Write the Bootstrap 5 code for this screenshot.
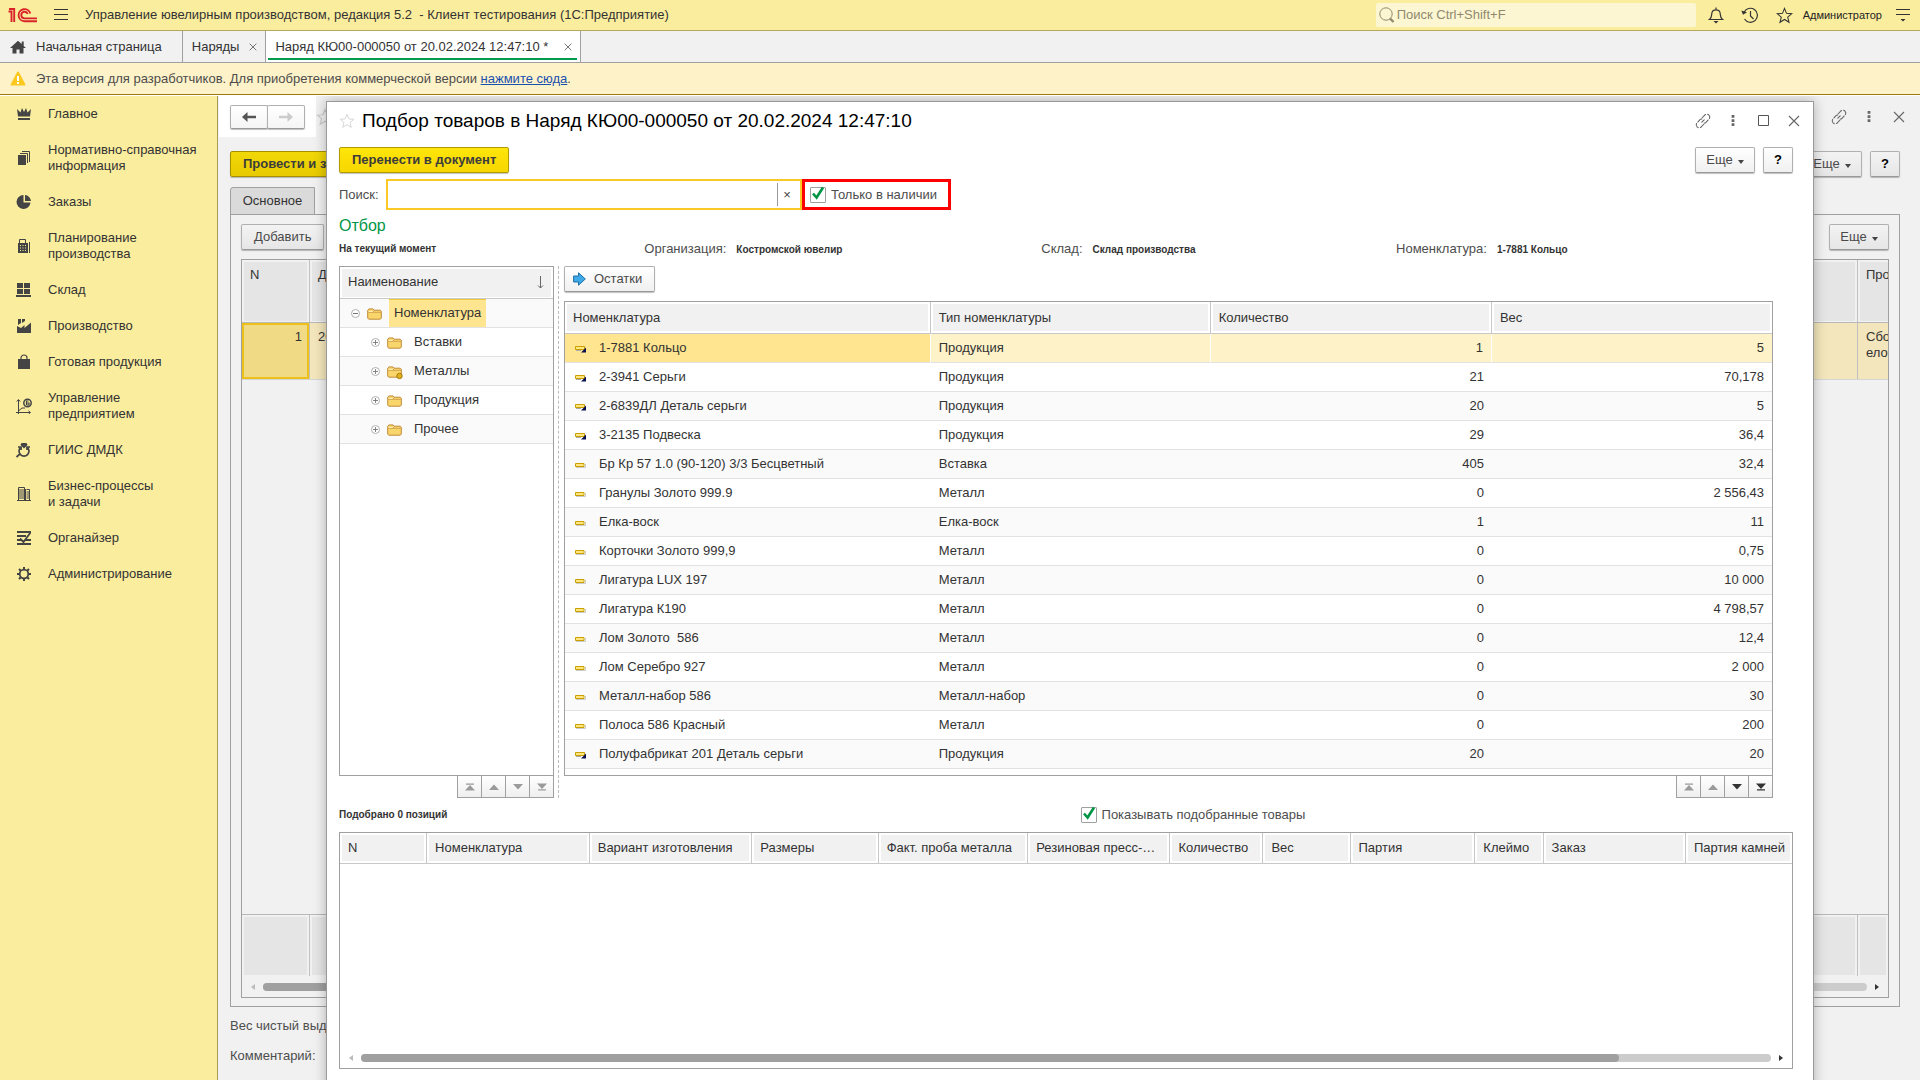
<!DOCTYPE html>
<html lang="ru">
<head>
<meta charset="utf-8">
<meta name="viewport" content="width=device-width, initial-scale=1">
<title>Управление ювелирным производством</title>
<link href="https://cdn.jsdelivr.net/npm/bootstrap@5.3.0/dist/css/bootstrap.min.css" rel="stylesheet">
<style>
:root{--yel:#fbed9e;--line:#a0a0a0;--soft:#c8c8c8;--head:#f1f1f1;--ink:#333}
body{font-family:"Liberation Sans",Arial,sans-serif;font-size:13px;line-height:16px;color:var(--ink);background:#f1f1f1}
svg{flex:none;display:block}
button,input{font:inherit;color:inherit}
a.plain{color:inherit;text-decoration:none}
.app{height:100vh;overflow:hidden}
.titlebar{height:31px;background:var(--yel);border-bottom:1px solid #b5a85c;padding:0 10px 0 8px}
.titlebar .app-name{margin-left:17px}
.find{width:320px;height:24px;background:#fdf6d3;border-radius:2px;padding:0 4px 0 3px;margin-right:12px}
.find input{border:0;background:none;outline:0;padding:0 0 0 2px;width:100%}
.find input::placeholder{color:#8f8a6e;opacity:1}
.tools{gap:17px;margin-right:10px}
.user{font-size:11px;color:#222;margin-right:14px}
.bare{border:0;background:none;padding:0;display:block;color:#444}
.opentabs{height:32px;border-bottom:1px solid var(--line)}
.opentab{border-right:1px solid var(--line);padding:0 8px 0 9px;gap:10px;position:relative}
.opentab.active{background:#fff;gap:16px}
.opentab.active::after{content:"";position:absolute;left:2px;right:3px;bottom:2px;height:2px;background:#009a4e}
.opentab.home{padding:0 20px 0 10px}
.notice{height:32px;background:#fef2c8;border-bottom:1px solid #9a7b10;padding-left:10px;gap:10px;color:#4d4d4d}
.notice a{color:#1a50b0}
.work{border-top:1px solid #fff;min-height:0}
.side{width:218px;background:var(--yel);border-right:1px solid #a69a55}
.side a{padding:10px 8px 10px 16px;gap:16px}
.side svg{color:#444}
.stage{position:relative;min-width:0;overflow:hidden}
/* document form under the picker */
.navwrap{background:#fff;margin-left:1px;padding:9px 11px 8px;height:41px}
.btn1c{border:1px solid #b0b0b0;border-bottom-color:#999;box-shadow:0 1px 1px rgba(0,0,0,.25);border-radius:2px;background:linear-gradient(#fff,#f0f0f0);height:26px;padding:0 12px;line-height:16px;color:#4a4a4a;white-space:nowrap}
.btn1c:hover{background:#f4f4f4}
.btn-main{background:linear-gradient(#ffe60a,#f7d600);border-color:#b29a00;font-weight:bold;color:#3c3c3c}
.dim .btn1c{background:linear-gradient(#f3f3f3,#e6e6e6)}
.dim .btn-main{background:linear-gradient(#f1d808,#e8ca00);border-color:#a69000}
.btn-q{width:30px;padding:0;color:#000;font-weight:bold;text-align:center}
.btn-more{width:60px;padding:0;gap:5px}
.btn-more::after{content:"";border:3px solid transparent;border-top:4px solid #444;border-bottom:0;margin-top:3px}
.navpair .btn1c{height:24px;width:38px;padding:0;background:linear-gradient(#fff,#f5f5f5)}
.navpair .btn1c+.btn1c{margin-left:-1px}
.wicons{color:#666}
.wicons.outer{margin-right:6px}
.wicons.inner{margin-right:-16px}
.dim{padding:14px 20px 0 12px}
.commands{margin-bottom:10px}
.pagetab{width:85px;height:28px;background:#dadada;border:1px solid var(--line);border-radius:3px 0 0 0;padding:0}
.panel1c{border:1px solid var(--line);margin-top:-1px;padding:9px 10px 8px;height:793px}
.backgrid{border:1px solid var(--line);margin-top:9px;height:739px}
.hcell{background:#e5e5e5;border:solid #f1f1f1;border-width:2px 2px 1px;padding:5px 0 0 6px}
.hrow{border-bottom:1px solid #b8b8b8}
.hrow>*+*{border-left:1px solid #c0c0c0}
.hrow.top{height:63px}
.hrow.item{height:57px;border-color:#d5d5d5;background:#f3e6bc}
.hrow.item>*+*{padding:6px 0 0 8px}
.hrow.total{height:62px;border-bottom:0;border-top:1px solid #b8b8b8}
.c-num{width:67px}.c-end{width:31px}
.current{border:2px solid #ecc11c;background:#f1da86;padding:4px 5px}
.scrollrow{height:21px;padding:0 9px}
.track{height:8px;border-radius:4px;background:#ccc}
.thumb{height:8px;border-radius:4px;background:#a0a0a0}
.tri-l,.tri-r{border:3px solid transparent;flex:none}
.tri-l{border-right:4px solid #bbb;border-left:0}
.tri-r{border-left:4px solid #333;border-right:0}
.foot{margin-top:11px}
.foot+.foot{margin-top:14px}
/* picker window */
.picker{position:absolute;left:108px;right:106px;top:5px;bottom:-20px;background:#fff;border:1px solid #999;box-shadow:0 0 12px rgba(0,0,0,.28);padding:0 20px 30px 12px}
.picker h1{font-size:19px;line-height:22px;color:#000;margin:0 0 0 7px;font-weight:normal}
.wtitle{height:45px;padding:5px 0 13px}
.lookrow{margin-top:6px}
.lookrow .cap{width:47px}
.lookup{border:2px solid #fbc926;height:31px;width:416px}
.lookup input{border:0;outline:0;width:100%;background:none;padding:0 4px}
.lookup button{border:0;border-left:1px solid #999;background:none;width:23px;height:23px;padding:0 4px 0 0;color:#444;flex:none}
.hot{border:3px solid #f00;height:31px;padding:0 8px 0 5px;width:149px}
.tick{appearance:none;width:16px;height:16px;border:1px solid #a0a0a0;border-radius:1px;margin:0;background:#fff;display:block}
.tickbox{position:relative;width:16px;height:16px;margin-right:5px}
.tickbox svg{position:absolute;left:1px;top:-2px;pointer-events:none}
.lbl{color:#4d4d4d}
.tiny{font-size:10px;font-weight:bold;color:#333}
.lbl>.tiny{margin-left:10px}
.filters .f1{margin-left:0}
h2.sect{font-size:16px;line-height:20px;color:#009646;font-weight:normal;margin:6px 0 0}
.filters{height:30px;padding-top:5px}
.f1{width:21%}.f2{width:27.3%}.f3{width:24.4%}
.mid{height:532px}
.tree{width:215px}
.goodspane{margin-right:20px}
.goodsbar{margin-bottom:9px}
.framed{border:1px solid var(--line);background:#fff}
.hd{height:31px;background:var(--head);border:2px solid #fff;border-bottom-width:1px;padding:0 7px 2px 6px;box-shadow:0 1px 0 var(--soft);margin-bottom:1px}
.tree ul{margin:0;padding:0;list-style:none}
.tree li{height:29px;border-bottom:1px solid #e2e2e2;padding-left:31px;gap:7px}
.tree li:nth-child(odd),.goods tbody tr:nth-child(odd){background:#fafafa}
.tree li.root{padding-left:11px}
.tree li span{padding:6px 5px}
.tree li.root span{background:#ffe58f;border-top:1px solid #f3ca3d;padding-top:5px}
.split{border-left:1px dashed #bbb;margin:0 5px 0 4px}
table.grid1c{table-layout:fixed;width:100%;border-collapse:separate;border-spacing:0;margin:0}
.grid1c th{height:31px;font-weight:normal;background:var(--head);background-clip:padding-box;border-bottom:1px solid var(--soft);border-right:1px solid var(--soft);box-shadow:inset 0 0 0 2px #fff;padding:0 8px;text-align:left;white-space:nowrap;overflow:hidden;text-overflow:ellipsis}
.grid1c th:last-child{border-right:0}
.goods th{height:32px}
.goods td{height:29px;border-bottom:1px solid #e2e2e2;padding:0 8px;white-space:pre}
.goods td:nth-child(n+3){text-align:right}
.goods td svg{display:inline-block;vertical-align:-1px;margin:0 12px 0 2px}
.goods tr.sel td{background:#fef2c8;border-right:1px solid #fff}
.goods tr.sel td:first-child{background:#ffe58f}
.goods tr.sel td:last-child{border-right:0}
.pager{height:22px}
.pager button{width:25px;height:22px;border:1px solid var(--line);border-top:0;background:linear-gradient(#fff,#efefef);padding:0;color:#9a9a9a;display:flex;align-items:center;justify-content:center}
.pager button+button{border-left:0;width:24px}
.pager button.on{color:#333}
.summary{height:34px}
.summary .count{width:51%}
.picked{height:237px}
.picked th:last-child{text-overflow:clip}
</style>
</head>
<body>
<svg width="0" height="0" class="position-absolute" aria-hidden="true">
<defs>
<symbol id="x" viewBox="0 0 12 12"><path d="M1 1l10 10M11 1L1 11" stroke="currentColor" fill="none" stroke-width="1.1"/></symbol>
<symbol id="dots" viewBox="0 0 4 12"><path d="M.5 0h3v3h-3zM.5 4.500h3v3h-3zM.5 9h3v3h-3z" fill="currentColor"/></symbol>
<symbol id="box" viewBox="0 0 11 11"><path d="M.5.5h10v10H.5z" fill="none" stroke="#555"/></symbol>
<symbol id="link" viewBox="0 0 16 16"><g fill="none" stroke="currentColor" stroke-width="1.100" stroke-linecap="round"><path d="M7 5l2.700-2.900a2.900 2.900 0 0 1 4.200 4.200L11 9.300c-.6.6-1.300.8-2 .7" stroke-dasharray="5 2"/><path d="M9 11l-2.700 2.900a2.900 2.900 0 0 1-4.200-4.200L5 6.700c.6-.6 1.300-.8 2-.7" stroke-dasharray="5 2"/><path d="M6.800 9.200l2.400-2.400"/></g></symbol>
<symbol id="star" viewBox="0 0 18 18"><path d="M9 1.500l2.100 5.200 5.600.4-4.300 3.600 1.400 5.500L9 13.200l-4.800 3 1.400-5.500-4.300-3.600 5.600-.4z" fill="none" stroke="currentColor" stroke-width="1.100"/></symbol>
<symbol id="fold" viewBox="0 0 15 13"><path d="M.7 11V3.200L2 1.900h4l1 1.300h6.200l1.100 1V11l-1 1.200H1.700z" fill="#f9d66b" stroke="#c08a3a"/><path d="M1.200 5.300h12.600M7 3.600l-1 1.500" stroke="#c99545" stroke-width=".8"/><path d="M1.600 4.500h4l.8-1" stroke="#fff0b8" fill="none"/></symbol>
<symbol id="minus" viewBox="0 0 9 9"><circle cx="4.500" cy="4.500" r="4" fill="#fff" stroke="#a8a8a8" stroke-width=".9"/><path d="M2 4.500h5" stroke="#777"/></symbol>
<symbol id="plus" viewBox="0 0 9 9"><circle cx="4.500" cy="4.500" r="4" fill="#fff" stroke="#a8a8a8" stroke-width=".9"/><path d="M2 4.500h5M4.500 2v5" stroke="#777" stroke-width=".9"/></symbol>
<symbol id="bar" viewBox="0 0 12 8"><path d="M1 6.500h9.500V3" stroke="#ccc" fill="none"/><path d="M.5 2.500h8.500v3H.5z" fill="#ffe680" stroke="#c9a000"/></symbol>
<symbol id="barn" viewBox="0 0 12 8"><path d="M.5 1.500h9v3h-9z" fill="#ffe680" stroke="#c9a000"/><path d="M1 5.500h5" stroke="#aaa"/><path d="M11 2.500V7.500H6z" fill="#0b1050"/></symbol>
<symbol id="tick" viewBox="0 0 14 16"><path d="M2 8.500l3.600 4L12 2.500" fill="none" stroke="#009646" stroke-width="2.600"/></symbol>
<symbol id="up" viewBox="0 0 12 8"><path d="M1 7h10L6 1.500z" fill="currentColor"/></symbol>
<symbol id="dn" viewBox="0 0 12 8"><path d="M1 1h10L6 6.500z" fill="currentColor"/></symbol>
<symbol id="top" viewBox="0 0 12 8"><path d="M1 7.500h10L6 2zM2 .5h8v1.200H2z" fill="currentColor"/></symbol>
<symbol id="end" viewBox="0 0 12 8"><path d="M1 .5h10L6 6zM2 6.300h8v1.200H2z" fill="currentColor"/></symbol>
</defs>
</svg>

<div class="app d-flex flex-column">
<header class="titlebar d-flex align-items-center">
  <svg width="30" height="16" viewBox="0 0 30 16" fill="none" stroke="#d8232a" stroke-width="1.900"><path d="M.5 4.500h3V15M1 2h5.200v13M29 14.200H16.500a6 6 0 1 1 5.800-7.700M29 11.400H16.500a3.300 3.300 0 1 1 3.200-4.400"/></svg>
  <button class="bare ms-3" aria-label="Меню"><svg width="14" height="14" viewBox="0 0 14 14"><path d="M0 1.500h14M0 6.500h14M0 11.500h14" stroke="#333"/></svg></button>
  <span class="app-name flex-grow-1">Управление ювелирным производством, редакция 5.2&nbsp; - Клиент тестирования (1С:Предприятие)</span>
  <label class="find d-flex align-items-center"><svg width="16" height="16" viewBox="0 0 16 16" fill="none" stroke="#8f8a6e"><circle cx="7" cy="7" r="6.200"/><path d="M11 11.500l3.500 3.500" stroke-width="2.400"/></svg><input type="search" placeholder="Поиск Ctrl+Shift+F" aria-label="Поиск"></label>
  <div class="tools d-flex align-items-center">
    <button class="bare" aria-label="Оповещения"><svg width="16" height="17" viewBox="0 0 16 17" fill="none" stroke="#333" stroke-width="1.200"><path d="M1.500 12.500c2.200-1.500 2-3.500 2.300-6C4 4 5.500 2.800 8 2.800s4 1.200 4.200 3.700c.3 2.500.1 4.500 2.300 6zM8 .5v2"/><path d="M5.500 14h5L8 16.500z" fill="#333" stroke="none"/></svg></button>
    <button class="bare" aria-label="История"><svg width="18" height="17" viewBox="0 0 18 17" fill="none" stroke="#333" stroke-width="1.200"><path d="M3 5.500A7 7 0 1 1 3.500 12M9.500 4v5l3 3"/><path d="M.3 3.500l1.700 4.300L6 5.300z" fill="#333" stroke="none"/></svg></button>
    <button class="bare" aria-label="Избранное"><svg width="17" height="17" color="#333"><use href="#star"/></svg></button>
  </div>
  <span class="user">Администратор</span>
  <button class="bare" aria-label="Сервис"><svg width="14" height="14" viewBox="0 0 14 14"><path d="M0 1.500h14M0 6.500h14" stroke="#333"/><path d="M4.500 11h5L7 13.500z" fill="#333"/></svg></button>
</header>

<nav class="opentabs d-flex">
  <a href="#" class="opentab home plain d-flex align-items-center"><svg width="16" height="14" viewBox="0 0 16 14"><path d="M8 .8L0 8h2.500v5.500h4V9.500h3v4h4V8H16l-2.300-2.100V1.500h-2v2.600z" fill="#444"/></svg>Начальная страница</a>
  <div class="opentab d-flex align-items-center"><a href="#" class="plain">Наряды</a><button class="bare" aria-label="Закрыть"><svg width="8" height="8"><use href="#x"/></svg></button></div>
  <div class="opentab active d-flex align-items-center"><a href="#" class="plain">Наряд КЮ00-000050 от 20.02.2024 12:47:10 *</a><button class="bare" aria-label="Закрыть"><svg width="8" height="8"><use href="#x"/></svg></button></div>
</nav>

<div class="notice d-flex align-items-center"><svg width="16" height="15" viewBox="0 0 16 15"><path d="M8 .5c.5 0 .8.3 1 .7l6.300 12c.3.700 0 1.300-.8 1.300h-13c-.8 0-1.100-.6-.8-1.300l6.300-12c.2-.4.5-.7 1-.7z" fill="#fbc81e"/><path d="M7 5h2v5H7zM7 11h2v2H7z" fill="#fff"/></svg><span>Эта версия для разработчиков. Для приобретения коммерческой версии <a href="#">нажмите сюда</a>.</span></div>

<div class="work d-flex flex-grow-1">
<nav class="side d-flex flex-column flex-shrink-0">
  <a href="#" class="plain d-flex align-items-center"><svg width="16" height="14" viewBox="0 0 16 14" fill="currentColor"><path d="M1 2l3.500 3.500L6 1l2 4 2-4 1.500 4.500L15 2l-1 7.500H2zM2 11h12v2H2z"/></svg>Главное</a>
  <a href="#" class="plain d-flex align-items-center"><svg width="16" height="16" viewBox="0 0 16 16"><path d="M2 5h8v10H2z" fill="currentColor"/><path d="M4 3.500h7.500V13M6 1.500h7.500V12" fill="none" stroke="currentColor"/></svg>Нормативно-справочная информация</a>
  <a href="#" class="plain d-flex align-items-center"><svg width="16" height="16" viewBox="0 0 16 16" fill="currentColor"><path d="M7.500 1a7 7 0 1 0 7 7.500h-7zM9 1v6h6A6.500 6.500 0 0 0 9 1z"/></svg>Заказы</a>
  <a href="#" class="plain d-flex align-items-center"><svg width="16" height="16" viewBox="0 0 16 16" fill="currentColor"><path d="M3.500 6V1.500h6V6M13.500 4v11" fill="none" stroke="currentColor"/><path fill-rule="evenodd" d="M2 5h10v10H2zM4 7v1h1V7zm2.500 0v1h1V7zM9 7v1h1V7zM4 9.500v1h1v-1zm2.500 0v1h1v-1zm2.500 0v1h1v-1zM4 12v1h1v-1zm2.500 0v1h1v-1zM9 12v1h1v-1z"/></svg>Планирование производства</a>
  <a href="#" class="plain d-flex align-items-center"><svg width="16" height="16" viewBox="0 0 16 16" fill="currentColor"><path d="M1 1h6v5H1zM8 1h6v5H8zM1 7h6v5H1zM8 7h6v5H8zM0 13h15v2H0z"/></svg>Склад</a>
  <a href="#" class="plain d-flex align-items-center"><svg width="16" height="16" viewBox="0 0 16 16" fill="currentColor"><path d="M1 15V8l4 2 3.500-3v3L15 4.500V15zM2 1h3v4L2 7zM6 1h3v2L6 5z"/></svg>Производство</a>
  <a href="#" class="plain d-flex align-items-center"><svg width="16" height="16" viewBox="0 0 16 16"><path d="M2 5h12v10H2z" fill="currentColor"/><path d="M5 8V4a3 3 0 0 1 6 0v4" fill="none" stroke="currentColor" stroke-width="1.200"/></svg>Готовая продукция</a>
  <a href="#" class="plain d-flex align-items-center"><svg width="16" height="16" viewBox="0 0 16 16" fill="none" stroke="currentColor"><path d="M2.500 16V2M0 14.500h14M.8 3.500L2.500 1.500l1.700 2M12.500 12.800l2 1.700-2 1.700M3 12.500l3-2.500h3"/><circle cx="11.500" cy="5" r="3.700" stroke-width="1.500"/><path d="M10.500 7V3h2M10.500 5h2.500v2h-2.500" stroke-width="1.200"/></svg>Управление предприятием</a>
  <a href="#" class="plain d-flex align-items-center"><svg width="16" height="16" viewBox="0 0 16 16"><path d="M4.500 5.500a5 5 0 1 0 7 0M.5 15l3.800-3.500M2 5h3v3M14 5h-3v3" fill="none" stroke="currentColor" stroke-width="1.700"/><path d="M5.500 1h5l1 2L8 6.500 4.500 3z" fill="currentColor"/></svg>ГИИС ДМДК</a>
  <a href="#" class="plain d-flex align-items-center"><svg width="16" height="16" viewBox="0 0 16 16" fill="none" stroke="currentColor"><path d="M2.500 14V1.500h6V14M10.500 3.500h3V14M9.500 3v11M1 14.500h14M3 4h5M3 6h5M3 8h5M3 10h5M3 12h5M10.500 6h3M10.500 8h3M10.500 10h3M10.500 12h3"/></svg>Бизнес-процессы<br>и задачи</a>
  <a href="#" class="plain d-flex align-items-center"><svg width="16" height="16" viewBox="0 0 16 16" fill="none" stroke="currentColor" stroke-width="1.800"><path d="M1 2h14M1 6h9M1 10h4M9 10h6M1 14h14M14.500 2.500L7.500 12 4 8.500"/></svg>Органайзер</a>
  <a href="#" class="plain d-flex align-items-center"><svg width="16" height="16" viewBox="0 0 16 16" fill="none" stroke="currentColor"><circle cx="8" cy="8" r="4.300" stroke-width="1.800"/><path d="M8 1v2.500M8 12.500V15M1 8h2.500M12.500 8H15M3 3l1.800 1.800M11.200 11.200L13 13M13 3l-1.800 1.800M4.800 11.200L3 13" stroke-width="2"/></svg>Администрирование</a>
</nav>

<main class="stage flex-grow-1">
  <div class="d-flex align-items-center">
    <div class="navwrap navpair d-flex">
      <button class="btn1c d-flex align-items-center justify-content-center" aria-label="Назад"><svg width="14" height="10" viewBox="0 0 14 10"><path d="M5.500 0v3.800H14v2.400H5.500V10L0 5z" fill="#555"/></svg></button>
      <button class="btn1c d-flex align-items-center justify-content-center" aria-label="Вперед"><svg width="14" height="10" viewBox="0 0 14 10"><path d="M8.500 0v3.800H0v2.400h8.500V10L14 5z" fill="#ccc"/></svg></button>
    </div>
    <svg width="18" height="18" color="#c8c8c8"><use href="#star"/></svg>
    <div class="wicons outer d-flex align-items-center ms-auto">
      <svg width="30" height="16"><use href="#link"/></svg>
      <svg width="30" height="11"><use href="#dots"/></svg>
      <svg width="30" height="12"><use href="#x"/></svg>
    </div>
  </div>
  <div class="dim">
    <div class="commands d-flex">
      <button class="btn1c btn-main">Провести и закрыть</button>
      <button class="btn1c btn-more d-flex align-items-center justify-content-center ms-auto me-2">Еще</button>
      <button class="btn1c btn-q">?</button>
    </div>
    <button class="pagetab d-block">Основное</button>
    <div class="panel1c">
      <div class="d-flex justify-content-between">
        <button class="btn1c">Добавить</button>
        <button class="btn1c btn-more d-flex align-items-center justify-content-center">Еще</button>
      </div>
      <div class="backgrid d-flex flex-column overflow-hidden">
        <div class="hrow top d-flex">
          <div class="c-num d-flex"><div class="hcell flex-grow-1">N</div></div>
          <div class="flex-grow-1 d-flex"><div class="hcell flex-grow-1">Дата</div></div>
          <div class="c-end d-flex overflow-hidden"><div class="hcell flex-shrink-0">Процент</div></div>
        </div>
        <div class="hrow item d-flex">
          <div class="c-num current text-end">1</div>
          <div class="flex-grow-1">20.02.2024</div>
          <div class="c-end overflow-hidden">Сборка<br>елочки</div>
        </div>
        <div class="flex-grow-1"></div>
        <div class="hrow total d-flex">
          <div class="c-num d-flex"><div class="hcell flex-grow-1"></div></div>
          <div class="flex-grow-1 d-flex"><div class="hcell flex-grow-1"></div></div>
          <div class="c-end d-flex"><div class="hcell flex-grow-1"></div></div>
        </div>
        <div class="scrollrow d-flex align-items-center gap-2"><i class="tri-l"></i><div class="track flex-grow-1"><div class="thumb" style="width:70%"></div></div><i class="tri-r"></i></div>
      </div>
    </div>
    <div class="lbl foot">Вес чистый выдано:</div>
    <div class="lbl foot">Комментарий:</div>
  </div>

  <section class="picker" role="dialog" aria-labelledby="dlg">
    <div class="wtitle d-flex align-items-center">
      <button class="bare" aria-label="В избранное"><svg width="16" height="16" color="#d5d5d5"><use href="#star"/></svg></button>
      <h1 id="dlg" class="flex-grow-1">Подбор товаров в Наряд КЮ00-000050 от 20.02.2024 12:47:10</h1>
      <div class="wicons inner d-flex align-items-center">
        <svg width="30" height="16"><use href="#link"/></svg>
        <svg width="30" height="11"><use href="#dots"/></svg>
        <svg width="31" height="11"><use href="#box"/></svg>
        <svg width="30" height="12"><use href="#x"/></svg>
      </div>
    </div>
    <div class="d-flex">
      <button class="btn1c btn-main">Перенести в документ</button>
      <button class="btn1c btn-more d-flex align-items-center justify-content-center ms-auto me-2">Еще</button>
      <button class="btn1c btn-q">?</button>
    </div>
    <div class="lookrow d-flex align-items-center lbl">
      <label for="q" class="cap">Поиск:</label>
      <div class="lookup d-flex align-items-center"><input id="q" type="text"><button aria-label="Очистить">×</button></div>
      <label class="hot d-flex align-items-center"><span class="tickbox"><input class="tick" type="checkbox" checked><svg width="14" height="16"><use href="#tick"/></svg></span>Только в наличии</label>
    </div>
    <h2 class="sect">Отбор</h2>
    <div class="filters d-flex lbl">
      <div class="f1 tiny">На текущий момент</div>
      <div class="f2 lbl">Организация:<span class="tiny">Костромской ювелир</span></div>
      <div class="f3 lbl">Склад:<span class="tiny">Склад производства</span></div>
      <div class="lbl">Номенклатура:<span class="tiny">1-7881 Кольцо</span></div>
    </div>

    <div class="mid d-flex">
      <div class="tree d-flex flex-column flex-shrink-0">
        <div class="framed flex-grow-1">
          <div class="hd d-flex align-items-center justify-content-between">Наименование<svg width="7" height="13" viewBox="0 0 7 13"><path d="M3.500 0v12M1 9.500l2.500 2.500L6 9.500" fill="none" stroke="#666"/></svg></div>
          <ul>
            <li class="root d-flex align-items-center"><svg width="9" height="9"><use href="#minus"/></svg><svg width="15" height="13"><use href="#fold"/></svg><span>Номенклатура</span></li>
            <li class="d-flex align-items-center"><svg width="9" height="9"><use href="#plus"/></svg><svg width="15" height="13"><use href="#fold"/></svg><span>Вставки</span></li>
            <li class="d-flex align-items-center"><svg width="9" height="9"><use href="#plus"/></svg><svg width="15" height="13" overflow="visible"><use href="#fold"/><circle cx="12.500" cy="11" r="2.700" fill="#e0b020" stroke="#a67c00"/></svg><span>Металлы</span></li>
            <li class="d-flex align-items-center"><svg width="9" height="9"><use href="#plus"/></svg><svg width="15" height="13"><use href="#fold"/></svg><span>Продукция</span></li>
            <li class="d-flex align-items-center"><svg width="9" height="9"><use href="#plus"/></svg><svg width="15" height="13"><use href="#fold"/></svg><span>Прочее</span></li>
          </ul>
        </div>
        <div class="pager d-flex justify-content-end">
          <button aria-label="В начало"><svg width="12" height="8"><use href="#top"/></svg></button><button aria-label="Вверх"><svg width="12" height="8"><use href="#up"/></svg></button><button aria-label="Вниз"><svg width="12" height="8"><use href="#dn"/></svg></button><button aria-label="В конец"><svg width="12" height="8"><use href="#end"/></svg></button>
        </div>
      </div>
      <div class="split"></div>
      <div class="goodspane flex-grow-1 d-flex flex-column">
        <div class="goodsbar"><button class="btn1c d-flex align-items-center gap-2 ps-2"><svg width="13" height="14" viewBox="0 0 13 14"><path d="M.6 4h4.900V.8L12.300 7l-6.800 6.200V10H.6z" fill="#3fa9e8" stroke="#1c6ea5"/></svg>Остатки</button></div>
        <div class="framed flex-grow-1 overflow-hidden">
          <table class="grid1c goods">
            <colgroup><col style="width:30.3%"><col style="width:23.2%"><col style="width:23.3%"><col></colgroup>
            <thead><tr><th>Номенклатура</th><th>Тип номенклатуры</th><th>Количество</th><th>Вес</th></tr></thead>
            <tbody>
            <tr class="sel"><td><svg width="12" height="8"><use href="#barn"/></svg>1-7881 Кольцо</td><td>Продукция</td><td>1</td><td>5</td></tr>
            <tr><td><svg width="12" height="8"><use href="#barn"/></svg>2-3941 Серьги</td><td>Продукция</td><td>21</td><td>70,178</td></tr>
            <tr><td><svg width="12" height="8"><use href="#barn"/></svg>2-6839ДЛ Деталь серьги</td><td>Продукция</td><td>20</td><td>5</td></tr>
            <tr><td><svg width="12" height="8"><use href="#barn"/></svg>3-2135 Подвеска</td><td>Продукция</td><td>29</td><td>36,4</td></tr>
            <tr><td><svg width="12" height="8"><use href="#bar"/></svg>Бр Кр 57 1.0 (90-120) 3/3 Бесцветный</td><td>Вставка</td><td>405</td><td>32,4</td></tr>
            <tr><td><svg width="12" height="8"><use href="#bar"/></svg>Гранулы Золото 999.9</td><td>Металл</td><td>0</td><td>2 556,43</td></tr>
            <tr><td><svg width="12" height="8"><use href="#bar"/></svg>Елка-воск</td><td>Елка-воск</td><td>1</td><td>11</td></tr>
            <tr><td><svg width="12" height="8"><use href="#bar"/></svg>Корточки Золото 999,9</td><td>Металл</td><td>0</td><td>0,75</td></tr>
            <tr><td><svg width="12" height="8"><use href="#bar"/></svg>Лигатура LUX 197</td><td>Металл</td><td>0</td><td>10 000</td></tr>
            <tr><td><svg width="12" height="8"><use href="#bar"/></svg>Лигатура К190</td><td>Металл</td><td>0</td><td>4 798,57</td></tr>
            <tr><td><svg width="12" height="8"><use href="#bar"/></svg>Лом Золото  586</td><td>Металл</td><td>0</td><td>12,4</td></tr>
            <tr><td><svg width="12" height="8"><use href="#bar"/></svg>Лом Серебро 927</td><td>Металл</td><td>0</td><td>2 000</td></tr>
            <tr><td><svg width="12" height="8"><use href="#bar"/></svg>Металл-набор 586</td><td>Металл-набор</td><td>0</td><td>30</td></tr>
            <tr><td><svg width="12" height="8"><use href="#bar"/></svg>Полоса 586 Красный</td><td>Металл</td><td>0</td><td>200</td></tr>
            <tr><td><svg width="12" height="8"><use href="#barn"/></svg>Полуфабрикат 201 Деталь серьги</td><td>Продукция</td><td>20</td><td>20</td></tr>
            </tbody>
          </table>
        </div>
        <div class="pager d-flex justify-content-end">
          <button aria-label="В начало"><svg width="12" height="8"><use href="#top"/></svg></button><button aria-label="Вверх"><svg width="12" height="8"><use href="#up"/></svg></button><button class="on" aria-label="Вниз"><svg width="12" height="8"><use href="#dn"/></svg></button><button class="on" aria-label="В конец"><svg width="12" height="8"><use href="#end"/></svg></button>
        </div>
      </div>
    </div>

    <div class="summary d-flex align-items-center">
      <div class="count tiny">Подобрано 0 позиций</div>
      <label class="d-flex align-items-center lbl"><span class="tickbox"><input class="tick" type="checkbox" checked><svg width="14" height="16"><use href="#tick"/></svg></span>Показывать подобранные товары</label>
    </div>

    <div class="framed picked d-flex flex-column">
      <table class="grid1c">
        <colgroup><col style="width:6%"><col style="width:11.2%"><col style="width:11.2%"><col style="width:8.7%"><col style="width:10.3%"><col style="width:9.8%"><col style="width:6.4%"><col style="width:6%"><col style="width:8.6%"><col style="width:4.7%"><col style="width:9.8%"><col></colgroup>
        <thead><tr><th>N</th><th>Номенклатура</th><th>Вариант изготовления</th><th>Размеры</th><th>Факт. проба металла</th><th>Резиновая пресс-форма</th><th>Количество</th><th>Вес</th><th>Партия</th><th>Клеймо</th><th>Заказ</th><th class="pe-0">Партия камней</th></tr></thead>
        <tbody></tbody>
      </table>
      <div class="scrollrow mt-auto d-flex align-items-center gap-2"><i class="tri-l"></i><div class="track flex-grow-1"><div class="thumb" style="width:89.2%"></div></div><i class="tri-r"></i></div>
    </div>
  </section>
</main>
</div>
</div>
<script src="https://cdn.jsdelivr.net/npm/bootstrap@5.3.0/dist/js/bootstrap.bundle.min.js"></script>
</body>
</html>
